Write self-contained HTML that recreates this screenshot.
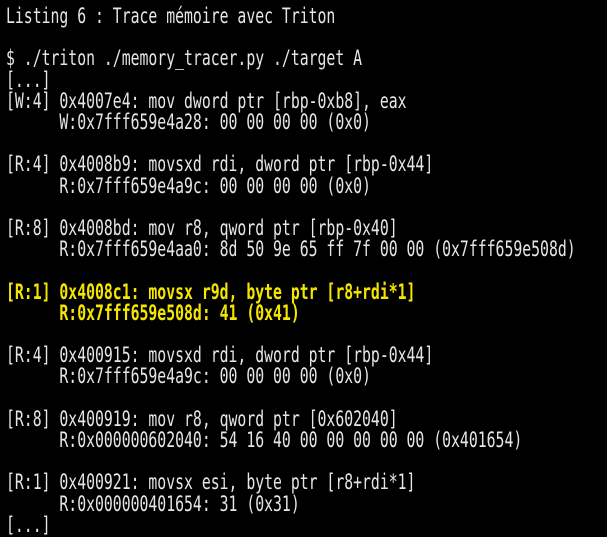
<!DOCTYPE html>
<html><head><meta charset="utf-8"><style>
html,body{margin:0;padding:0;background:#000;width:607px;height:534px;overflow:hidden}
pre{margin:0;position:absolute;left:6px;top:6px;font-family:"DejaVu Sans Mono","Liberation Mono",monospace;font-size:21px;line-height:21.2px;color:#e6e6e6;transform:scaleX(0.704);transform-origin:0 0;white-space:pre}
b{color:#f5e600;font-weight:bold}
</style></head><body><pre>Listing 6 : Trace mémoire avec Triton

$ ./triton ./memory_tracer.py ./target A
[...]
[W:4] 0x4007e4: mov dword ptr [rbp-0xb8], eax
      W:0x7fff659e4a28: 00 00 00 00 (0x0)

[R:4] 0x4008b9: movsxd rdi, dword ptr [rbp-0x44]
      R:0x7fff659e4a9c: 00 00 00 00 (0x0)

[R:8] 0x4008bd: mov r8, qword ptr [rbp-0x40]
      R:0x7fff659e4aa0: 8d 50 9e 65 ff 7f 00 00 (0x7fff659e508d)

<b>[R:1] 0x4008c1: movsx r9d, byte ptr [r8+rdi*1]
      R:0x7fff659e508d: 41 (0x41)</b>

[R:4] 0x400915: movsxd rdi, dword ptr [rbp-0x44]
      R:0x7fff659e4a9c: 00 00 00 00 (0x0)

[R:8] 0x400919: mov r8, qword ptr [0x602040]
      R:0x000000602040: 54 16 40 00 00 00 00 00 (0x401654)

[R:1] 0x400921: movsx esi, byte ptr [r8+rdi*1]
      R:0x000000401654: 31 (0x31)
[...]</pre></body></html>
